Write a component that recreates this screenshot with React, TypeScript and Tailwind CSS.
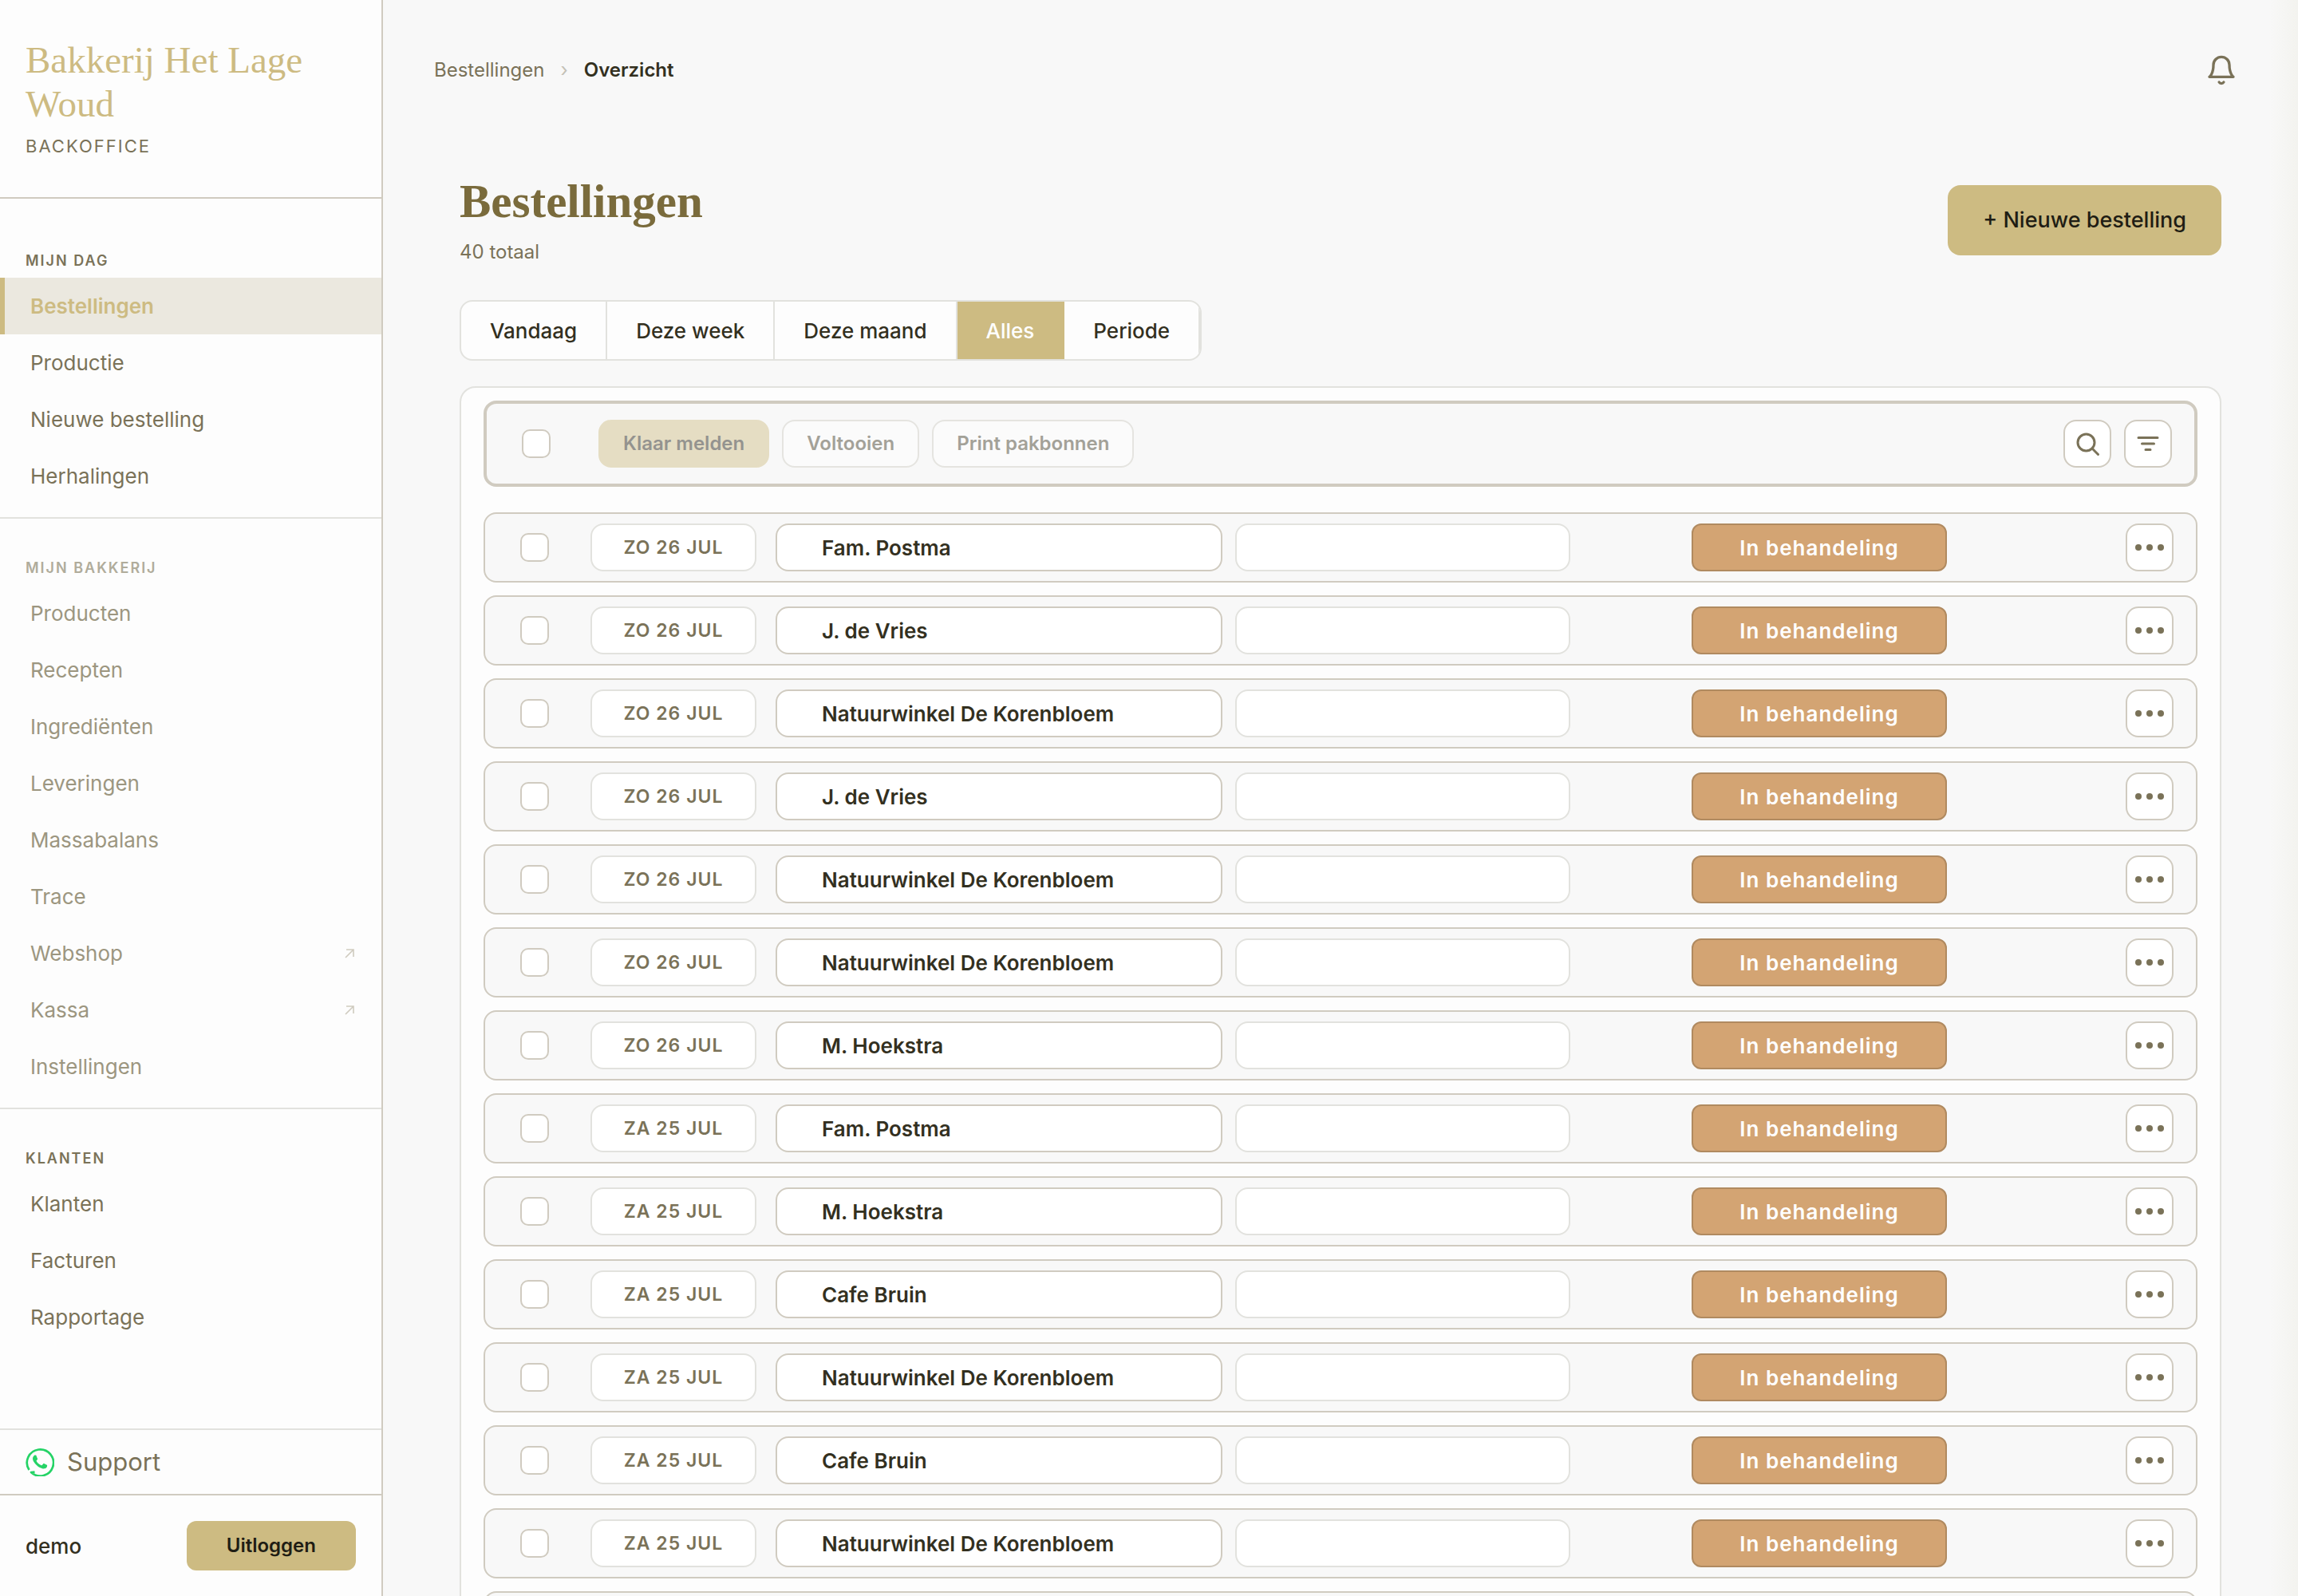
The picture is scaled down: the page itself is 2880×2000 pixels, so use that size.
import React from 'react';

interface NavItem {
  label: string;
  active?: boolean;
  external?: boolean;
}

interface NavSection {
  title: string;
  muted?: boolean;
  items: NavItem[];
}

interface Order {
  date: string;
  customer: string;
}

const SECTIONS: NavSection[] = [
  {
    title: 'Mijn dag',
    items: [
      { label: 'Bestellingen', active: true },
      { label: 'Productie' },
      { label: 'Nieuwe bestelling' },
      { label: 'Herhalingen' },
    ],
  },
  {
    title: 'Mijn bakkerij',
    muted: true,
    items: [
      { label: 'Producten' },
      { label: 'Recepten' },
      { label: 'Ingrediënten' },
      { label: 'Leveringen' },
      { label: 'Massabalans' },
      { label: 'Trace' },
      { label: 'Webshop', external: true },
      { label: 'Kassa', external: true },
      { label: 'Instellingen' },
    ],
  },
  {
    title: 'Klanten',
    items: [{ label: 'Klanten' }, { label: 'Facturen' }, { label: 'Rapportage' }],
  },
];

const PERIODS = ['Vandaag', 'Deze week', 'Deze maand', 'Alles', 'Periode'];

const ORDERS: Order[] = [
  { date: 'Zo 26 jul', customer: 'Fam. Postma' },
  { date: 'Zo 26 jul', customer: 'J. de Vries' },
  { date: 'Zo 26 jul', customer: 'Natuurwinkel De Korenbloem' },
  { date: 'Zo 26 jul', customer: 'J. de Vries' },
  { date: 'Zo 26 jul', customer: 'Natuurwinkel De Korenbloem' },
  { date: 'Zo 26 jul', customer: 'Natuurwinkel De Korenbloem' },
  { date: 'Zo 26 jul', customer: 'M. Hoekstra' },
  { date: 'Za 25 jul', customer: 'Fam. Postma' },
  { date: 'Za 25 jul', customer: 'M. Hoekstra' },
  { date: 'Za 25 jul', customer: 'Cafe Bruin' },
  { date: 'Za 25 jul', customer: 'Natuurwinkel De Korenbloem' },
  { date: 'Za 25 jul', customer: 'Cafe Bruin' },
  { date: 'Za 25 jul', customer: 'Natuurwinkel De Korenbloem' },
  { date: 'Za 25 jul', customer: 'Fam. Postma' },
];

function WhatsAppIcon() {
  return (
    <svg width="36" height="36" viewBox="0 0 36 36" fill="none" aria-hidden="true">
      <path
        d="M11.500 30.600 7 31A16.600 16.600 0 1 0 4.500 28"
        stroke="#25d366"
        strokeWidth="2.700"
        strokeLinejoin="round"
      />
      <path
        transform="scale(1.5)"
        fill="#25d366"
        d="M17.472 14.382c-.297-.149-1.758-.867-2.03-.967-.273-.099-.471-.148-.67.15-.197.297-.767.966-.94 1.164-.173.199-.347.223-.644.075-.297-.15-1.255-.463-2.39-1.475-.883-.788-1.48-1.761-1.653-2.059-.173-.297-.018-.458.13-.606.134-.133.298-.347.446-.52.149-.174.198-.298.298-.497.099-.198.05-.371-.025-.52-.075-.149-.669-1.612-.916-2.207-.242-.579-.487-.5-.669-.51-.173-.008-.371-.01-.57-.01-.198 0-.52.074-.792.372-.272.297-1.04 1.016-1.04 2.479 0 1.462 1.065 2.875 1.213 3.074.149.198 2.096 3.2 5.077 4.487.709.306 1.262.489 1.694.625.712.227 1.36.195 1.871.118.571-.085 1.758-.719 2.006-1.413.248-.694.248-1.289.173-1.413-.074-.124-.272-.198-.57-.347"
      />
    </svg>
  );
}

function ExternalIcon() {
  return (
    <svg width="12" height="12" viewBox="0 0 12 12" fill="none" stroke="#cfcbbf" strokeWidth="1.6" aria-hidden="true">
      <path d="M1 11 11 1M2 1H11v9" />
    </svg>
  );
}

function Checkbox({ label }: { label: string }) {
  return (
    <input
      type="checkbox"
      aria-label={label}
      className="block size-9 shrink-0 appearance-none rounded-[10px] border-2 border-[#d0cbc0] bg-white checked:bg-[#cdbb82]"
    />
  );
}

function Sidebar() {
  return (
    <aside className="flex h-full w-[480px] shrink-0 flex-col border-r-2 border-[#d0cbc0] bg-[#fdfdfd]">
      <div className="h-[249px] shrink-0 border-b-2 border-[#d0cbc0] px-8 pt-12">
        <p className="font-[Georgia,'Liberation_Serif',serif] text-[47px] leading-[55px] text-[#cdbb82]">
          Bakkerij Het Lage Woud
        </p>
        <p className="mt-[11px] text-[22px] leading-7 tracking-[2px] text-[#7a7258] uppercase">Backoffice</p>
      </div>

      <nav className="flex-1 overflow-hidden pt-4">
        {SECTIONS.map((section) => (
          <div key={section.title} className="border-b-2 border-[#e2e2de] pt-[50px] pb-4 last:border-b-0">
            <h2
              className={`mb-[9px] px-8 text-[18px] leading-6 font-semibold tracking-[2px] uppercase ${
                section.muted ? 'text-[#b0ac9b]' : 'text-[#7a7258]'
              }`}
            >
              {section.title}
            </h2>
            {section.items.map((item) => (
              <a
                key={item.label}
                href="#"
                className={`flex h-[71px] items-center justify-between border-l-6 pr-[34px] pl-8 text-[26px] ${
                  item.active
                    ? 'border-[#cdbb82] bg-[#ebe8df] font-semibold text-[#cdbb82]'
                    : section.muted
                      ? 'border-transparent text-[#9c9680]'
                      : 'border-transparent text-[#7a7258]'
                }`}
              >
                {item.label}
                {item.external && <ExternalIcon />}
              </a>
            ))}
          </div>
        ))}
      </nav>

      <a
        href="#"
        className="flex h-[82px] items-center gap-4 border-t-2 border-[#e2e2de] px-8 text-[31px] text-[#7a7258]"
      >
        <WhatsAppIcon />
        Support
      </a>
      <div className="flex h-[128px] items-center justify-between border-t-2 border-[#d0cbc0] px-8">
        <span className="text-[26px] font-medium text-[#33301f]">demo</span>
        <button className="h-[62px] rounded-xl bg-[#cdbb82] px-[50px] text-[24px] font-semibold text-[#1f1d14]">
          Uitloggen
        </button>
      </div>
    </aside>
  );
}

function Toolbar() {
  return (
    <div className="flex h-[108px] items-center rounded-2xl border-4 border-[#d0cbc0] bg-[#f8f8f8] pr-7 pl-11">
      <Checkbox label="Alles selecteren" />
      <div className="ml-[60px] flex gap-4 text-[24px] font-semibold">
        <button disabled className="h-[60px] rounded-2xl border-2 border-[#e5ddc3] bg-[#e5ddc3] px-[29px] text-[#94938f]">
          Klaar melden
        </button>
        <button disabled className="h-[60px] rounded-2xl border-2 border-[#e5e4e0] bg-[#fbfbfb] px-[29px] text-[#a3a198]">
          Voltooien
        </button>
        <button disabled className="h-[60px] rounded-2xl border-2 border-[#e5e4e0] bg-[#fbfbfb] px-[29px] text-[#a3a198]">
          Print pakbonnen
        </button>
      </div>
      <div className="ml-auto flex gap-4">
        <button aria-label="Zoeken" className="flex size-[60px] items-center justify-center rounded-2xl border-2 border-[#d0cbc0] bg-white">
          <svg width="36" height="36" viewBox="0 0 24 24" fill="none" stroke="#7a7258" strokeWidth="2" strokeLinecap="round">
            <circle cx="11" cy="11" r="7" />
            <path d="m21 21-4.800-4.800" />
          </svg>
        </button>
        <button aria-label="Filteren" className="flex size-[60px] items-center justify-center rounded-2xl border-2 border-[#d0cbc0] bg-white">
          <svg width="36" height="36" viewBox="0 0 24 24" fill="none" stroke="#7a7258" strokeWidth="2" strokeLinecap="round">
            <path d="M4 7h16M7 12h10M10 17h4" />
          </svg>
        </button>
      </div>
    </div>
  );
}

function OrderRow({ order }: { order: Order }) {
  return (
    <tr className="grid h-[88px] grid-cols-[88px_232px_minmax(0,576fr)_minmax(0,572fr)_minmax(0,544fr)_60px] items-center rounded-2xl border-2 border-[#d0cbc0] bg-[#f8f8f8] pr-7 pl-11">
      <td>
        <Checkbox label={`Selecteer bestelling van ${order.customer}`} />
      </td>
      <td className="flex h-[60px] w-52 items-center justify-center rounded-2xl border-2 border-[#e2e2de] bg-white text-[23px] font-semibold tracking-[1px] text-[#7a7258] uppercase">
        {order.date}
      </td>
      <td className="mr-4 flex h-[60px] items-center rounded-2xl border-2 border-[#d0cbc0] bg-white px-14 text-[26px] font-semibold text-[#33301f]">
        {order.customer}
      </td>
      <td className="h-[60px] w-[420px] rounded-2xl border-2 border-[#e2e2de] bg-white" />
      <td>
        <button className="h-[60px] w-80 rounded-xl border-2 border-[#b08a60] bg-[#d3a473] text-[26px] font-semibold tracking-[1px] text-white">
          In behandeling
        </button>
      </td>
      <td>
        <button aria-label="Meer acties" className="flex size-[60px] items-center justify-center rounded-2xl border-2 border-[#d0cbc0] bg-white">
          <svg width="40" height="10" viewBox="0 0 40 10" fill="#7a7258">
            <circle cx="6" cy="5" r="4" />
            <circle cx="20" cy="5" r="4" />
            <circle cx="34" cy="5" r="4" />
          </svg>
        </button>
      </td>
    </tr>
  );
}

export default function App() {
  return (
    <div className="flex h-screen overflow-hidden bg-[#f8f8f8] font-[Inter,sans-serif] text-[#33301f]">
      <Sidebar />
      <main className="min-w-0 flex-1 overflow-hidden bg-[linear-gradient(to_left,#f3f3ef,#f8f8f8_36px)]">
        <header className="flex h-44 items-center justify-between pr-[76px] pl-16">
          <nav aria-label="Kruimelpad" className="flex items-center gap-5 text-[24px]">
            <a href="#" className="text-[#7a7258]">
              Bestellingen
            </a>
            <span className="text-[#c4c1b6]">›</span>
            <span className="font-semibold">Overzicht</span>
          </nav>
          <button aria-label="Meldingen">
            <svg width="40" height="40" viewBox="0 0 24 24" fill="none" stroke="#7a7258" strokeWidth="2" strokeLinecap="round" strokeLinejoin="round">
              <path d="M18 8a6 6 0 0 0-12 0c0 7-3 9-3 9h18s-3-2-3-9" />
              <path d="M13.730 21a2 2 0 0 1-3.460 0" />
            </svg>
          </button>
        </header>

        <div className="px-24">
          <div className="flex items-start justify-between pt-11">
            <div>
              <h1 className="font-[Georgia,'Liberation_Serif',serif] text-[59px] leading-[64px] font-bold text-[#7a6b3c]">
                Bestellingen
              </h1>
              <p className="mt-4 text-[24px] leading-8 text-[#7a7258]">40 totaal</p>
            </div>
            <button className="mt-3 h-[88px] rounded-2xl bg-[#cdbb82] px-11 text-[27px] font-medium text-[#1f1d14]">
              + Nieuwe bestelling
            </button>
          </div>

          <div className="mt-11 flex h-[76px] w-fit overflow-hidden rounded-2xl border-2 border-[#e2e2de] bg-[#fdfdfd]">
            {PERIODS.map((period) => (
              <button
                key={period}
                className={`border-r-2 px-9 text-[26px] font-medium ${
                  period === 'Alles' ? 'border-[#cdbb82] bg-[#cdbb82] text-white' : 'border-[#e2e2de]'
                }`}
              >
                {period}
              </button>
            ))}
          </div>

          <section className="mt-8 rounded-[20px] border-2 border-[#e2e2de] bg-[#fdfdfd] px-7 py-4">
            <Toolbar />
            <table className="mt-8 block">
              <tbody className="flex flex-col gap-4">
                {ORDERS.map((order, i) => (
                  <OrderRow key={i} order={order} />
                ))}
              </tbody>
            </table>
          </section>
        </div>
      </main>
    </div>
  );
}
